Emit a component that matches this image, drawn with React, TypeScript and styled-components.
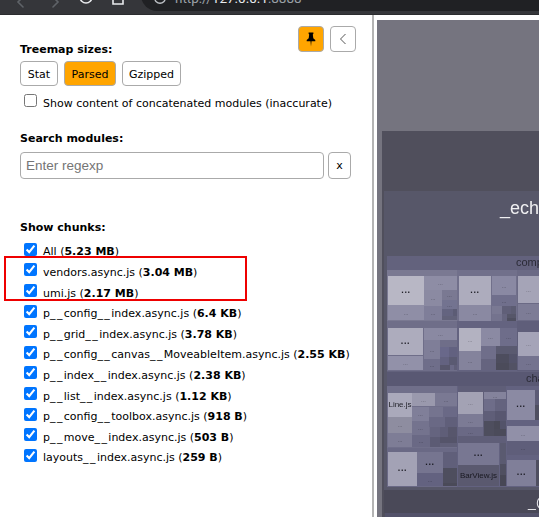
import type { FC } from 'react';
import styled, { createGlobalStyle } from 'styled-components';

type Tile = [x1: number, y1: number, x2: number, y2: number, color: string, label?: string];

// page coordinates, the svg viewBox starts where the panel starts
const TILES: Tile[] = [
  // backdrops
  [377, 20, 539, 517, '#75747f'],
  [382, 131, 539, 517, '#504f5c'],
  [384, 191, 539, 490, '#575769'],
  [387, 256, 539, 372, '#63627d'],
  [387, 372, 539, 386, '#595873'],
  [387, 386, 539, 487, '#636280'],
  [384, 490, 539, 513, '#4a4958'],
  [385, 513, 539, 517, '#53526a'],
  // components
  [387, 270, 457, 321, '#7a7992'],
  [457, 270, 517, 321, '#71708b'],
  [517, 270, 539, 321, '#6b6a85'],
  [387, 321, 457, 371, '#6f6e89'],
  [457, 321, 517, 371, '#646380'],
  [517, 321, 539, 371, '#5f5e7a'],
  [388, 276, 424, 305, '#b8b7c5', '...'],
  [388, 305, 424, 320, '#8f8ea6', '...'],
  [424, 276, 457, 290, '#8e8da5', '...'],
  [424, 290, 442, 306, '#8b8aa2', '...'],
  [442, 290, 457, 300, '#7a7992', '...'],
  [442, 300, 457, 309, '#737390', '...'],
  [424, 306, 442, 320, '#7f7e99', '...'],
  [442, 309, 453, 316, '#646480'],
  [453, 309, 457, 316, '#5c5c75'],
  [442, 316, 457, 320, '#62627a'],
  [459, 276, 491, 305, '#adacbd', '...'],
  [459, 305, 491, 321, '#8a89a2', '...'],
  [492, 276, 516, 295, '#8a89a3', '...'],
  [492, 295, 516, 306, '#706f8c', '...'],
  [492, 306, 502, 314, '#7a7993'],
  [492, 314, 502, 321, '#74738e'],
  [502, 306, 511, 314, '#605f78'],
  [511, 306, 516, 314, '#5c5c72'],
  [502, 314, 507, 321, '#66657f'],
  [507, 314, 516, 318, '#565669'],
  [507, 318, 516, 321, '#4f4f60'],
  [518, 276, 539, 303, '#a5a4b7', '...'],
  [518, 304, 539, 320, '#7d7c96', '...'],
  [388, 328, 423, 355, '#adacbd', '...'],
  [388, 356, 423, 370, '#9291a9', '...'],
  [424, 328, 457, 340, '#8a89a2', '...'],
  [424, 340, 440, 359, '#7f7e98', '...'],
  [424, 359, 440, 370, '#6f6e8a', '...'],
  [440, 340, 457, 347, '#6f6e89'],
  [440, 347, 449, 357, '#69688a'],
  [449, 347, 457, 357, '#626180'],
  [440, 357, 449, 365, '#636280'],
  [449, 357, 457, 365, '#5a5a72'],
  [440, 365, 450, 370, '#57566c'],
  [450, 365, 454, 370, '#6a6986'],
  [454, 365, 457, 370, '#5f5e78'],
  [459, 328, 481, 351, '#b3b2c1', '...'],
  [459, 351, 481, 370, '#84839c', '...'],
  [481, 328, 500, 346, '#8b8aa3', '...'],
  [500, 328, 517, 346, '#6e6d8a', '...'],
  [481, 346, 496, 359, '#6f6e8a'],
  [481, 359, 496, 370, '#65647f'],
  [496, 346, 517, 354, '#5a5a70'],
  [496, 354, 509, 363, '#4d4d5e'],
  [509, 354, 517, 363, '#53536a'],
  [496, 363, 509, 370, '#4b4b5a'],
  [509, 363, 517, 370, '#525264'],
  [518, 332, 539, 356, '#a5a4b8', '...'],
  [518, 356, 539, 370, '#74738f', '...'],
  // charts
  [387, 386, 457, 448, '#706f8a'],
  [387, 448, 457, 487, '#6a6985'],
  [388, 393, 412, 417, '#aaa9bb', 'Line.js'],
  [388, 417, 412, 433, '#8e8da0', '...'],
  [388, 433, 412, 447, '#7e7d96', '...'],
  [412, 393, 435, 406, '#9a99ad', '...'],
  [435, 393, 457, 406, '#7a7993', '...'],
  [412, 407, 429, 421, '#807f99', '...'],
  [429, 407, 443, 417, '#75748f'],
  [443, 407, 457, 417, '#6a6986'],
  [412, 421, 429, 435, '#74738e', '...'],
  [429, 417, 445, 427, '#6a6985'],
  [445, 417, 457, 427, '#605f7a'],
  [412, 435, 430, 447, '#6a6985', '...'],
  [430, 427, 440, 437, '#65647f'],
  [440, 427, 448, 437, '#5f5e78'],
  [448, 427, 457, 437, '#57566c'],
  [430, 437, 440, 447, '#5c5b74'],
  [440, 437, 457, 443, '#55546a'],
  [440, 443, 457, 447, '#605f78'],
  [388, 452, 417, 486, '#a3a2b5', '...'],
  [417, 452, 443, 473, '#767590', '...'],
  [417, 473, 443, 486, '#636280', '...'],
  [443, 452, 457, 468, '#605f7a'],
  [443, 468, 457, 483, '#4e4e5e'],
  [443, 483, 457, 486, '#4a4a58'],
  [458, 386, 506, 436, '#5f5e78'],
  [458, 436, 506, 443, '#5f5e78'],
  [458, 392, 483, 414, '#a3a2b4', '...'],
  [484, 392, 506, 399, '#84839c', '...'],
  [458, 414, 483, 427, '#7c7b95', '...'],
  [458, 427, 483, 436, '#6a6985', '...'],
  [484, 399, 495, 411, '#6e6d89'],
  [495, 399, 506, 411, '#64637e'],
  [484, 411, 495, 421, '#5f5e78'],
  [495, 411, 506, 421, '#585770'],
  [484, 421, 494, 436, '#4e4e5e'],
  [494, 421, 500, 429, '#4a4a58'],
  [500, 421, 506, 429, '#53536a'],
  [494, 429, 506, 436, '#4b4b5a'],
  [458, 443, 499, 465, '#787792', '...'],
  [458, 465, 499, 486, '#5a596f', 'BarView.js'],
  [500, 443, 506, 464, '#5a5a70'],
  [500, 464, 506, 475, '#4f4f60'],
  [500, 475, 506, 486, '#474755'],
  [507, 390, 535, 420, '#8b8aa3', '...'],
  [535, 390, 539, 405, '#5c5b75'],
  [535, 405, 539, 420, '#4f4f60'],
  [507, 426, 539, 441, '#9190a8', '...'],
  [507, 441, 539, 455, '#5f5e7a', '...'],
  [507, 460, 536, 486, '#807f99', '...'],
  [536, 460, 539, 486, '#4f4f60'],
];

const CHUNKS: [string, string][] = [
  ['All', '5.23 MB'],
  ['vendors.async.js', '3.04 MB'],
  ['umi.js', '2.17 MB'],
  ['p__config__index.async.js', '6.4 KB'],
  ['p__grid__index.async.js', '3.78 KB'],
  ['p__config__canvas__MoveableItem.async.js', '2.55 KB'],
  ['p__index__index.async.js', '2.38 KB'],
  ['p__list__index.async.js', '1.12 KB'],
  ['p__config__toolbox.async.js', '918 B'],
  ['p__move__index.async.js', '503 B'],
  ['layouts__index.async.js', '259 B'],
];

const GlobalStyle = createGlobalStyle`
  html, body {
    margin: 0;
    padding: 0;
    height: 100%;
    overflow: hidden;
    background: #fff;
  }
`;

const Page = styled.div`
  width: 539px;
  height: 517px;
  display: flex;
  flex-direction: column;
  overflow: hidden;
  font-family: "DejaVu Sans", Verdana, sans-serif;
  font-size: 11px;
  color: #000;
`;

const BrowserBar = styled.div`
  height: 15px;
  flex: none;
  display: flex;
  overflow: hidden;
  background: #35363a;
  border-bottom: 1px solid #2b2c2f;
  box-sizing: border-box;
`;

const NavIcons = styled.svg`
  width: 141px;
  height: 15px;
  flex: none;
`;

const AddressPill = styled.div`
  flex: 1;
  height: 32px;
  margin-top: -21px;
  padding: 6px 0 0 12px;
  box-sizing: border-box;
  border-radius: 16px 0 0 16px;
  background: #202124;
  display: flex;
  align-items: center;
  gap: 8px;
  font-family: Roboto, "Liberation Sans", sans-serif;
  font-size: 13.5px;
  color: #9aa0a6;
`;

const UrlHost = styled.span`
  color: #e8eaed;
`;

const Body = styled.div`
  flex: 1;
  display: flex;
  min-height: 0;
`;

const Sidebar = styled.aside`
  width: 374px;
  flex: none;
  box-sizing: border-box;
  border-right: 2px solid #b4b4b4;
  padding: 11px 16px 0 20px;
  position: relative;
`;

const TopRow = styled.div`
  height: 31px;
  display: flex;
  justify-content: space-between;
  align-items: flex-start;
`;

const PinGroup = styled.div`
  display: flex;
  gap: 6px;
`;

const IconButton = styled.button<{ $active?: boolean }>`
  width: 26px;
  height: 26px;
  padding: 0;
  display: flex;
  align-items: center;
  justify-content: center;
  box-sizing: border-box;
  border: 1px solid #aaa;
  border-radius: 4px;
  background: ${p => (p.$active ? '#ffa500' : '#fff')};
`;

const Title = styled.div<{ $top?: number; $bottom?: number }>`
  font-weight: bold;
  font-size: 11px;
  line-height: 15px;
  margin-top: ${p => p.$top ?? 0}px;
  margin-bottom: ${p => p.$bottom ?? 0}px;
`;

const SizeButtons = styled.div`
  display: flex;
  gap: 6px;
  margin-top: 4px;
`;

const SizeButton = styled.button<{ $active?: boolean; $width: number }>`
  width: ${p => p.$width}px;
  height: 25px;
  padding: 2px 0 0;
  box-sizing: border-box;
  border: 1px solid #aaa;
  border-radius: 4px;
  font: 11px "DejaVu Sans", Verdana, sans-serif;
  color: #000;
  background: ${p => (p.$active ? '#ffa500' : '#fff')};
`;

const CheckRow = styled.label<{ $top?: number }>`
  display: flex;
  align-items: center;
  height: 20.6px;
  margin-top: ${p => p.$top ?? 0}px;
  white-space: nowrap;
`;

const Check = styled.input`
  width: 13px;
  height: 13px;
  margin: -3px 6px 0 4px;
  flex: none;
`;

const CheckText = styled.span`
  padding-top: 2px;
`;

const Underscore = styled.span`
  letter-spacing: 1.4px;
`;

const SearchRow = styled.div`
  display: flex;
  gap: 4px;
  margin-top: 6px;
`;

const SearchInput = styled.input`
  width: 304px;
  height: 27px;
  box-sizing: border-box;
  border: 1px solid #aaa;
  border-radius: 4px;
  padding: 0 5px;
  font: 13.5px "Liberation Sans", Arial, sans-serif;
  &::placeholder {
    color: #757575;
  }
`;

const ClearButton = styled.button`
  width: 23px;
  height: 27px;
  padding: 0;
  box-sizing: border-box;
  border: 1px solid #aaa;
  border-radius: 4px;
  background: #fff;
  font: 11px "DejaVu Sans", Verdana, sans-serif;
  color: #000;
`;

const ChunkList = styled.div`
  display: flex;
  flex-direction: column;
  margin-top: 6px;
`;

const Highlight = styled.div`
  position: absolute;
  left: 4px;
  top: 241px;
  width: 243px;
  height: 45px;
  box-sizing: border-box;
  border: 2px solid #ee0000;
  pointer-events: none;
`;

const TreemapPanel = styled.main`
  flex: 1;
  min-width: 0;
`;

const TreemapSvg = styled.svg`
  display: block;
  width: 165px;
  height: 502px;
  filter: blur(0.6px);
`;

const Treemap: FC = () => (
  <TreemapSvg viewBox="374 15 165 502">
    {TILES.map(([x1, y1, x2, y2, color, label], i) => {
      const big = x2 - x1 > 25 && y2 - y1 > 18;
      const dots = label === '...';
      return (
        <g key={i}>
          <rect x={x1} y={y1} width={x2 - x1} height={y2 - y1} fill={color} />
          {label && (
            <text
              x={(x1 + x2) / 2}
              y={(y1 + y2) / 2 + 2}
              fontSize={dots ? (big ? 9 : 6) : 8}
              fontWeight={dots && big ? 'bold' : 'normal'}
              fontFamily="'Liberation Sans', Arial, sans-serif"
              letterSpacing={dots && big ? 0.6 : 0}
              fill="#111118"
              opacity={dots && !big ? 0.55 : 0.9}
              textAnchor="middle"
            >
              {label}
            </text>
          )}
        </g>
      );
    })}
    <g fontFamily="'Liberation Sans', Arial, sans-serif">
      <text x={500} y={214} fontSize={18} fill="#f0f0f2">_echarts</text>
      <text x={516} y={266} fontSize={11} fill="#2a2a36">components</text>
      <text x={526} y={382} fontSize={11} fill="#2a2a36">charts</text>
      <text x={528} y={507} fontSize={14} fill="#ececf0">_@umijs</text>
    </g>
  </TreemapSvg>
);

// verdana's underscores run wider than dejavu's
const ChunkName: FC<{ name: string }> = ({ name }) => (
  <>
    {name.split(/(_+)/).map((part, i) =>
      part.startsWith('_') ? <Underscore key={i}>{part}</Underscore> : part
    )}
  </>
);

const App: FC = () => (
  <Page>
    <GlobalStyle />
    <BrowserBar>
      <NavIcons viewBox="0 0 141 15" fill="none" strokeLinecap="round">
        <path d="M23 -3 18 2 23 7" stroke="#5f6368" strokeWidth="1.6" />
        <path d="M53 -3 58 2 53 7" stroke="#5f6368" strokeWidth="1.6" />
        <path d="M80 -3a6 6 0 0 0 12 0" stroke="#e8eaed" strokeWidth="1.6" />
        <path d="M113 -2v6h10v-6" stroke="#e8eaed" strokeWidth="1.6" />
      </NavIcons>
      <AddressPill>
        <svg width="14" height="14" viewBox="0 0 16 16" fill="none">
          <circle cx="8" cy="8" r="6" stroke="#bdc1c6" strokeWidth="1.6" />
          <circle cx="8" cy="8" r="2" fill="#bdc1c6" />
        </svg>
        <span>
          http://<UrlHost>127.0.0.1</UrlHost>:8888
        </span>
      </AddressPill>
    </BrowserBar>
    <Body>
      <Sidebar>
        <TopRow>
          <Title $top={16}>Treemap sizes:</Title>
          <PinGroup>
            <IconButton $active>
              <svg width="10" height="15" viewBox="0 0 10 15">
                <path d="M2.6 0.5h4.8v1.2L6.8 2.6 7.3 6.2 9.3 8v1.2H5.5L5 14.5 4.5 9.2H0.7V8l2-1.8 0.5-3.6-0.6-0.9z" fill="#000" />
              </svg>
            </IconButton>
            <IconButton>
              <svg width="8" height="12" viewBox="0 0 8 12" fill="none">
                <path d="M6.5 1 1.5 6l5 5" stroke="#555" strokeWidth="1" />
              </svg>
            </IconButton>
          </PinGroup>
        </TopRow>
        <SizeButtons>
          <SizeButton $width={38}>Stat</SizeButton>
          <SizeButton $width={52} $active>Parsed</SizeButton>
          <SizeButton $width={59}>Gzipped</SizeButton>
        </SizeButtons>
        <CheckRow $top={6}>
          <Check type="checkbox" />
          <CheckText>Show content of concatenated modules (inaccurate)</CheckText>
        </CheckRow>
        <Title $top={18}>Search modules:</Title>
        <SearchRow>
          <SearchInput placeholder="Enter regexp" />
          <ClearButton>x</ClearButton>
        </SearchRow>
        <Title $top={41}>Show chunks:</Title>
        <ChunkList>
          {CHUNKS.map(([name, size]) => (
            <CheckRow key={name}>
              <Check type="checkbox" defaultChecked />
              <CheckText>
                <ChunkName name={name} /> (<b>{size}</b>)
              </CheckText>
            </CheckRow>
          ))}
        </ChunkList>
        <Highlight />
      </Sidebar>
      <TreemapPanel>
        <Treemap />
      </TreemapPanel>
    </Body>
  </Page>
);

export default App;
